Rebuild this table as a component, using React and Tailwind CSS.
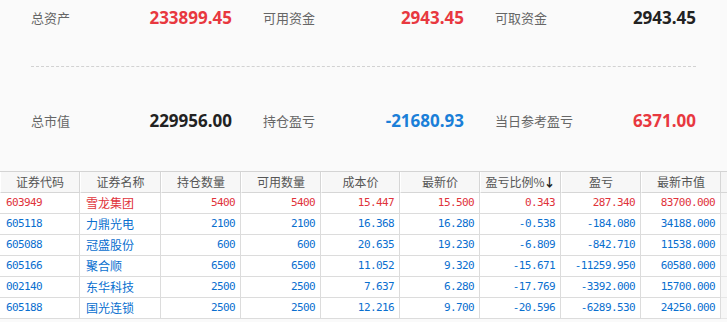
import React from "react";

const summary = [
  [
    ["总资产", "233899.45", "text-[#e8383f]"],
    ["可用资金", "2943.45", "text-[#e8383f]"],
    ["可取资金", "2943.45", "text-[#222]"],
  ],
  [
    ["总市值", "229956.00", "text-[#222]"],
    ["持仓盈亏", "-21680.93", "text-[#1a7fd8]"],
    ["当日参考盈亏", "6371.00", "text-[#e8383f]"],
  ],
];

const headers = ["证券代码", "证券名称", "持仓数量", "可用数量", "成本价", "最新价", "盈亏比例%", "盈亏", "最新市值"];

const rows = [
  ["603949", "雪龙集团", "5400", "5400", "15.447", "15.500", "0.343", "287.340", "83700.000", true],
  ["605118", "力鼎光电", "2100", "2100", "16.368", "16.280", "-0.538", "-184.080", "34188.000", false],
  ["605088", "冠盛股份", "600", "600", "20.635", "19.230", "-6.809", "-842.710", "11538.000", false],
  ["605166", "聚合顺", "6500", "6500", "11.052", "9.320", "-15.671", "-11259.950", "60580.000", false],
  ["002140", "东华科技", "2500", "2500", "7.637", "6.280", "-17.769", "-3392.000", "15700.000", false],
  ["605188", "国光连锁", "2500", "2500", "12.216", "9.700", "-20.596", "-6289.530", "24250.000", false],
];

const grid = "grid grid-cols-[80px_81px_80px_80px_79px_80px_81px_80px_80px_1fr]";
const cjk = { fontFamily: '"Noto Sans CJK SC", "Noto Sans", sans-serif' };
const mono = { fontFamily: '"DejaVu Sans Mono", "Liberation Mono", monospace' };

export default function App() {
  return (
    <div className="w-[727px] h-[322px] bg-[#fafafa] overflow-hidden">
      <div className="pl-[31px] pr-[31px]">
        {summary.map((row, ri) => (
          <React.Fragment key={ri}>
            {ri === 1 && (
              <>
                <div className="mt-[30px] border-t border-dashed border-[#d2d2d2]" />
                <div className="h-[36px]" />
              </>
            )}
            <div className="flex gap-[31px] h-[36px] items-center">
              {row.map(([label, value, color]) => (
                <div key={label} className="w-[201px] flex items-center justify-between">
                  <span className="text-[13px] text-[#666]" style={cjk}>{label}</span>
                  <span
                    className={`text-[17px] font-bold ${color}`}
                    style={{ fontFamily: '"Noto Sans", "Open Sans", sans-serif' }}
                  >
                    {value}
                  </span>
                </div>
              ))}
            </div>
          </React.Fragment>
        ))}
      </div>
      <div className="mt-[32px] bg-white border-t border-[#d4d4d4]">
        <div className={`${grid} h-[21px] bg-[#f7f7f7]`}>
          {headers.map((h, i) => (
            <div
              key={h}
              className="border-r border-b border-[#d6d6d6] border-l border-l-white flex items-center justify-center text-[12px] text-[#555]"
              style={cjk}
            >
              {h}
              {i === 6 && <span className="font-bold text-[#222] text-[12px] -ml-[1px]">↓</span>}
            </div>
          ))}
          <div className="border-b border-[#d6d6d6] bg-[#f5f5f5]" />
        </div>
        {rows.map((r) => {
          const color = r[9] ? "text-[#e0333b]" : "text-[#0a6fcf]";
          return (
            <div key={r[0]} className={`${grid} h-[21px] ${color}`}>
              <div
                className="border-r border-b border-[#dcdcdc] flex items-center pl-[6px] text-[11px] tracking-[-0.6px]"
                style={mono}
              >
                {r[0]}
              </div>
              <div className="border-r border-b border-[#dcdcdc] flex items-center pl-[6px] text-[12px]" style={cjk}>
                {r[1]}
              </div>
              {r.slice(2, 9).map((v, i) => (
                <div
                  key={i}
                  className="border-r border-b border-[#dcdcdc] flex items-center justify-end pr-[5px] text-[11px] tracking-[-0.6px]"
                  style={mono}
                >
                  {v}
                </div>
              ))}
              <div className="border-b border-[#e6e6e6] bg-[#f7f7f7]" />
            </div>
          );
        })}
      </div>
    </div>
  );
}
